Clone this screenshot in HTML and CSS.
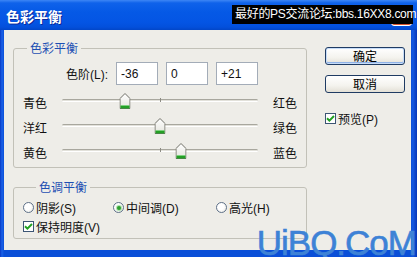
FILE: index.html
```html
<!DOCTYPE html>
<html>
<head>
<meta charset="utf-8">
<link rel="stylesheet" href="styles.css">
</head>
<body>
<div class="window">
  <div class="titlebar">
    <span class="title">色彩平衡</span>
    <span class="close"></span>
    <span class="site-label">最好的PS交流论坛:bbs.16XX8.com</span>
  </div>
  <div class="client">
    <div class="main">
      <fieldset class="group group-balance">
        <legend>色彩平衡</legend>
        <div class="levels">
          <span class="levels-label">色阶(L):</span>
          <input class="field" type="text" value="-36" readonly>
          <input class="field" type="text" value="0" readonly>
          <input class="field" type="text" value="+21" readonly>
        </div>
        <div class="slider-row">
          <span class="lbl">青色</span>
          <div class="slider">
            <div class="track"></div>
            <span class="tick"></span>
            <svg class="thumb" style="left:32%" width="11" height="16" viewBox="0 0 11 16"><defs><linearGradient id="tg1" x1="0" y1="0" x2="0" y2="1"><stop offset="0" stop-color="#ffffff"/><stop offset="1" stop-color="#e4e4dc"/></linearGradient></defs><path d="M0.5 15.5V5.5L5.5 0.5L10.5 5.5V15.5Z" fill="url(#tg1)" stroke="#6f6f66"/><rect x="1" y="12.5" width="9" height="3" fill="#23a025"/><rect x="1" y="12" width="9" height="1" fill="#7fd07f"/></svg>
          </div>
          <span class="lbl">红色</span>
        </div>
        <div class="slider-row">
          <span class="lbl">洋红</span>
          <div class="slider">
            <div class="track"></div>
            <span class="tick"></span>
            <svg class="thumb" style="left:50%" width="11" height="16" viewBox="0 0 11 16"><defs><linearGradient id="tg2" x1="0" y1="0" x2="0" y2="1"><stop offset="0" stop-color="#ffffff"/><stop offset="1" stop-color="#e4e4dc"/></linearGradient></defs><path d="M0.5 15.5V5.5L5.5 0.5L10.5 5.5V15.5Z" fill="url(#tg2)" stroke="#6f6f66"/><rect x="1" y="12.5" width="9" height="3" fill="#23a025"/><rect x="1" y="12" width="9" height="1" fill="#7fd07f"/></svg>
          </div>
          <span class="lbl">绿色</span>
        </div>
        <div class="slider-row">
          <span class="lbl">黄色</span>
          <div class="slider">
            <div class="track"></div>
            <span class="tick"></span>
            <svg class="thumb" style="left:60.5%" width="11" height="16" viewBox="0 0 11 16"><defs><linearGradient id="tg3" x1="0" y1="0" x2="0" y2="1"><stop offset="0" stop-color="#ffffff"/><stop offset="1" stop-color="#e4e4dc"/></linearGradient></defs><path d="M0.5 15.5V5.5L5.5 0.5L10.5 5.5V15.5Z" fill="url(#tg3)" stroke="#6f6f66"/><rect x="1" y="12.5" width="9" height="3" fill="#23a025"/><rect x="1" y="12" width="9" height="1" fill="#7fd07f"/></svg>
          </div>
          <span class="lbl">蓝色</span>
        </div>
      </fieldset>
      <fieldset class="group group-tone">
        <legend>色调平衡</legend>
        <div class="radios">
          <span class="opt"><span class="radio"></span>阴影(S)</span>
          <span class="opt"><span class="radio on"></span>中间调(D)</span>
          <span class="opt"><span class="radio"></span>高光(H)</span>
        </div>
        <div class="check-row">
          <span class="opt"><span class="check"><svg width="9" height="9" viewBox="0 0 9 9"><path d="M1 4.2L3.4 6.6L8 2" fill="none" stroke="#21a121" stroke-width="2"/></svg></span>保持明度(V)</span>
        </div>
      </fieldset>
    </div>
    <div class="side">
      <button class="btn default">确定</button>
      <button class="btn">取消</button>
      <span class="opt preview"><span class="check"><svg width="9" height="9" viewBox="0 0 9 9"><path d="M1 4.2L3.4 6.6L8 2" fill="none" stroke="#21a121" stroke-width="2"/></svg></span>预览(P)</span>
    </div>
  </div>
  <div class="watermark">UiBQ.CoM</div>
</div>
</body>
</html>
```
FILE: styles.css
```css
html, body {
  margin: 0;
  padding: 0;
}
body {
  font-family: "Liberation Sans", "Noto Sans CJK SC", sans-serif;
  font-size: 12px;
  color: #111;
}
.window {
  position: relative;
  width: 417px;
  height: 257px;
  display: flex;
  flex-direction: column;
  background: linear-gradient(to right, #0839c4 0, #1a62e8 2px, #0a4fd8 4px, #0a4fd8 411px, #1458e0 413px, #0636b8 417px);
  overflow: hidden;
}
.titlebar {
  position: relative;
  height: 30px;
  flex: none;
  display: flex;
  align-items: center;
  padding: 0 5px 0 6px;
  background: linear-gradient(to bottom, #3d86f5 0, #0f62ea 3px, #0559e6 12px, #0455e4 22px, #0350dc 27px, #0246c8 30px);
}
.title {
  font-family: "Noto Sans CJK SC", sans-serif;
  font-weight: bold;
  font-size: 14px;
  color: #fff;
  text-shadow: 1px 1px 0 #0a2a9a;
  padding-top: 1px;
}
.close {
  margin-left: auto;
  width: 21px;
  height: 21px;
  box-sizing: border-box;
  border: 1px solid #fff;
  border-radius: 3px;
  background: #d9532c;
}
.site-label {
  position: absolute;
  left: 232px;
  top: 5px;
  width: 181px;
  height: 19px;
  box-sizing: border-box;
  padding-left: 3px;
  background: #000;
  color: #fff;
  font-family: "Liberation Sans", "Noto Sans CJK SC", sans-serif;
  font-size: 12px;
  letter-spacing: -0.3px;
  line-height: 19px;
  white-space: nowrap;
}
.client {
  flex: 1;
  margin: 0 6px 7px 4px;
  background: #eeede8;
  display: flex;
  gap: 18px;
  padding: 11px 0 0 9px;
}
.main {
  width: 294px;
  display: flex;
  flex-direction: column;
}
.group {
  margin: 0;
  padding: 0;
  min-width: 0;
  border: 1px solid #c2c1b8;
  border-radius: 3px;
}
.group legend {
  margin-left: 13px;
  padding: 0 3px;
  font-size: 12px;
  line-height: 14px;
  color: #1d4fb3;
  font-family: "Noto Sans CJK SC", sans-serif;
}
.group-balance {
  padding-bottom: 4px;
}
.levels {
  margin-top: 7px;
  display: grid;
  grid-template-columns: 94px 42px 42px 42px;
  column-gap: 8px;
  align-items: center;
}
.levels-label {
  justify-self: end;
}
.field {
  width: 42px;
  height: 23px;
  box-sizing: border-box;
  margin: 0;
  border: 1px solid #a3acb8;
  background: #fff;
  padding: 0 4px;
  font-family: "Liberation Sans", sans-serif;
  font-size: 12px;
  color: #111;
  outline: none;
}
.slider-row {
  display: grid;
  grid-template-columns: 24px 196px 24px;
  column-gap: 15px;
  padding-left: 9px;
  height: 25px;
}
.levels + .slider-row {
  margin-top: 3px;
}
.lbl {
  padding-top: 8px;
  line-height: 14px;
  font-family: "Noto Sans CJK SC", sans-serif;
  white-space: nowrap;
}
.slider {
  position: relative;
  height: 25px;
}
.track {
  margin-top: 11px;
  height: 3px;
  box-sizing: border-box;
  border-top: 1px solid #a8a79e;
  border-bottom: 1px solid #ffffff;
  background: #e2e1da;
  border-radius: 2px;
}
.tick {
  position: absolute;
  left: 98px;
  top: 10px;
  width: 1px;
  height: 4px;
  background: #8d8c84;
}
.thumb {
  position: absolute;
  top: 5px;
  transform: translateX(-50%);
  display: block;
}
.group-tone {
  margin-top: 12px;
  padding: 4px 0 2px 9px;
}
.radios {
  display: grid;
  grid-template-columns: 90px 103px auto;
  height: 19px;
  align-items: center;
}
.check-row {
  height: 19px;
  display: flex;
  align-items: center;
}
.opt {
  display: flex;
  align-items: center;
  gap: 2px;
  white-space: nowrap;
}
.radio {
  width: 11px;
  height: 11px;
  box-sizing: border-box;
  border: 1px solid #5f7189;
  border-radius: 50%;
  background: radial-gradient(circle at 40% 40%, #ffffff 40%, #e2e2da 100%);
  position: relative;
  flex: none;
}
.radio.on::after {
  content: "";
  position: absolute;
  left: 2.5px;
  top: 2.5px;
  width: 4px;
  height: 4px;
  border-radius: 50%;
  background: #2ea02e;
  box-shadow: 0 0 1px 1px #a6dea6;
}
.check {
  width: 11px;
  height: 11px;
  box-sizing: border-box;
  border: 1px solid #3c5574;
  background: #fff;
  display: flex;
  align-items: center;
  justify-content: center;
  flex: none;
}
.check svg {
  display: block;
}
.side {
  width: 80px;
  padding-top: 6px;
  display: flex;
  flex-direction: column;
}
.btn {
  width: 80px;
  height: 18px;
  box-sizing: border-box;
  margin: 0 0 10px 0;
  padding: 0;
  border: 1px solid #1f3b63;
  border-radius: 3px;
  background: linear-gradient(to bottom, #ffffff 0, #f4f3ee 60%, #e3e0d6 100%);
  font-family: "Noto Sans CJK SC", sans-serif;
  font-size: 12px;
  line-height: 14px;
  color: #000;
}
.btn.default {
  box-shadow: inset 0 0 0 1px #c6dcf8, inset 0 -1px 0 1px #8fb2e8;
}
.preview {
  margin-top: 7px;
  gap: 2px;
}
.watermark {
  position: absolute;
  right: 1px;
  bottom: 0;
  font-family: "Liberation Sans", sans-serif;
  font-size: 35px;
  line-height: 28px;
  letter-spacing: -1px;
  color: #3d82d6;
  -webkit-text-stroke: 0.6px #3d82d6;
  white-space: nowrap;
}
```
